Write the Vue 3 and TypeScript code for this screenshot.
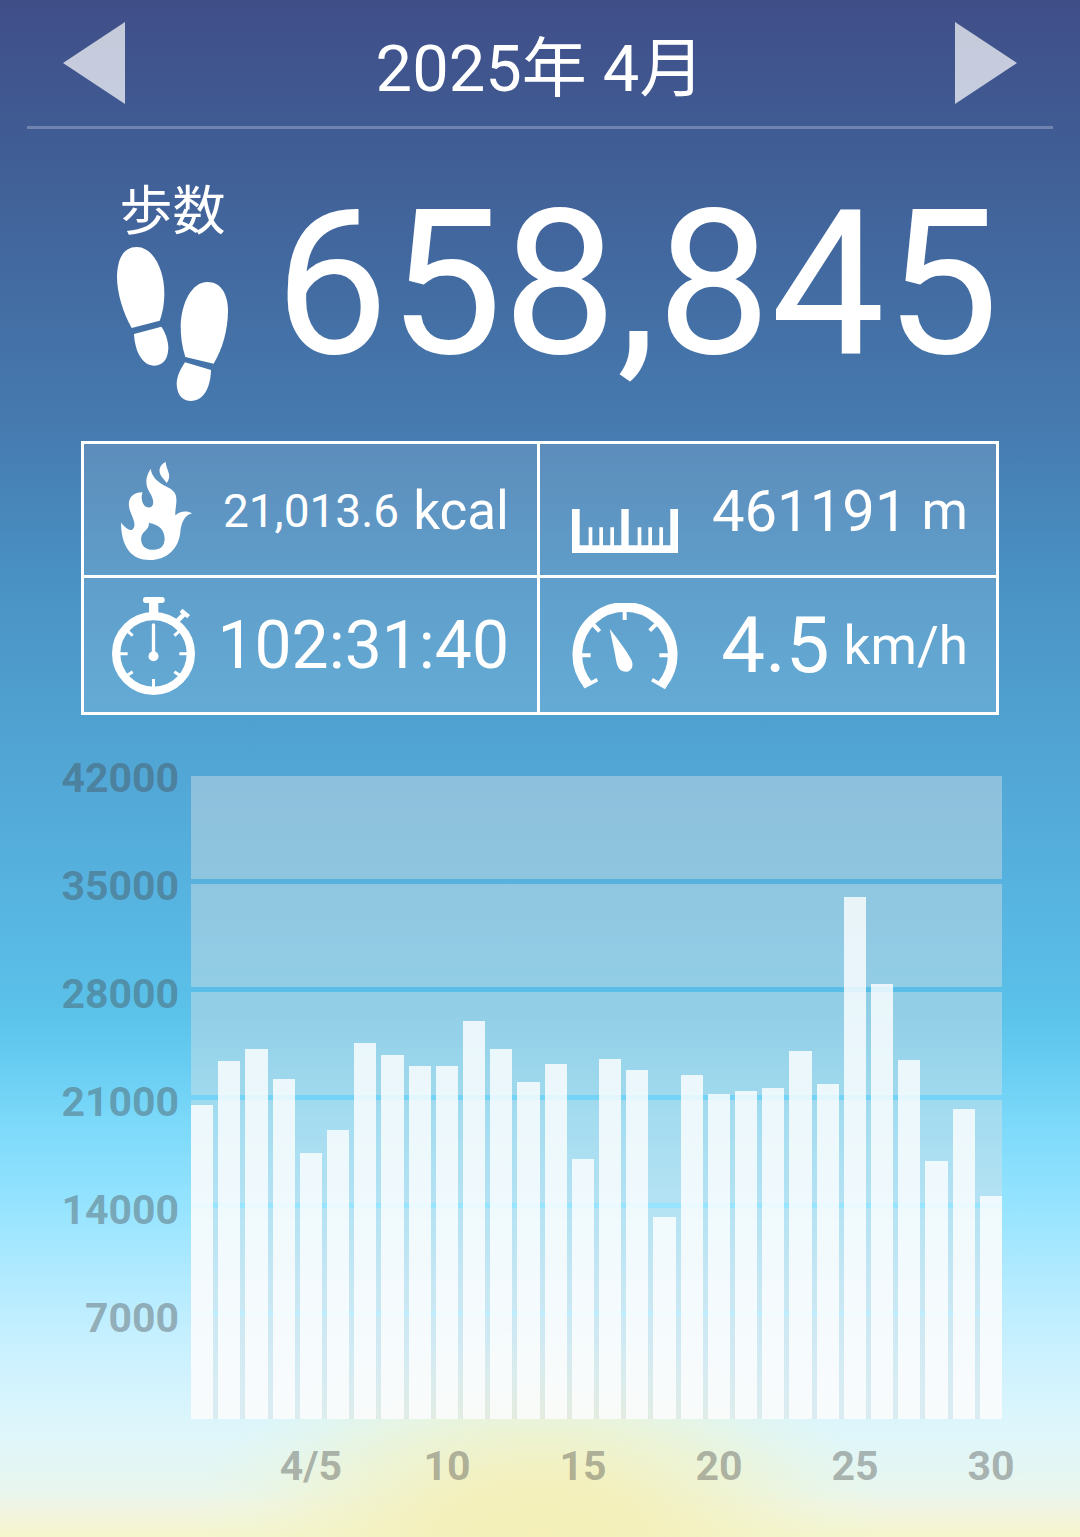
<script setup lang="ts">
interface Tick {
  day: number
  label: string
}

const year = 2025
const month = 4
const totalSteps = 658845

const dailySteps: number[] = [
  20352, 23204, 23982, 22037, 17241, 18732, 24403, 23593, 22880, 22880,
  25796, 23982, 21875, 23009, 16852, 23366, 22620, 13093, 22329, 21065,
  21259, 21486, 23884, 21713, 33833, 28195, 23269, 16722, 20093, 14454,
]

const levels: number[] = [42000, 35000, 28000, 21000, 14000, 7000]

// Steps that fill the plot from its bottom edge to its top edge
const plotRange = 41676

const ticks: Tick[] = [5, 10, 15, 20, 25, 30].map((day) => ({
  day,
  label: day === 5 ? `${month}/${day}` : String(day),
}))

const barHeight = (steps: number): string => `${(steps / plotRange) * 100}%`
</script>

<template>
  <main class="page">
    <header class="header">
      <button class="arrow" type="button" aria-label="前の月">
        <svg viewBox="0 0 62 82"><path d="M62 0V82L0 41Z" /></svg>
      </button>
      <h1 class="title">{{ year }}年 {{ month }}月</h1>
      <button class="arrow" type="button" aria-label="次の月">
        <svg viewBox="0 0 62 82"><path d="M0 0V82L62 41Z" /></svg>
      </button>
    </header>

    <section class="hero">
      <div class="hero-label">
        <h2 class="hero-name">歩数</h2>
        <svg class="feet" viewBox="51 231 333 462" aria-hidden="true">
          <path d="M95 474C70 430 51 370 51 320C52 270 68 231 110 231C160 231 193 300 193 370C193 400 188 430 179 452Z" />
          <path d="M102 492L184 470C198 490 205 515 205 535C204 565 190 587 163 587C130 587 105 550 102 492Z" />
          <path d="M256 561C246 530 242 500 242 465C244 400 275 336 322 336C365 336 384 375 384 425C383 480 368 535 341 581Z" />
          <path d="M255 577L333 600C332 650 312 693 272 693C240 692 230 665 230 638C232 615 243 595 255 577Z" />
        </svg>
      </div>
      <p class="hero-value">{{ totalSteps.toLocaleString('en-US') }}</p>
    </section>

    <section class="stats">
      <div class="stat">
        <svg class="icon flame" viewBox="122 81 214 295" aria-hidden="true">
          <path d="M257 81C256 95 270 115 267 127C266 135 263 141 259 144C255 134 239 125 238 108C238 95 247 85 257 81Z" />
          <path
            fill-rule="evenodd"
            d="M212 101C213 125 235 143 258 155C280 165 289 175 289 195C289 215 284 230 286 241C297 232 318 224 336 236C315 240 304 262 301 290C297 340 262 376 208 376C155 376 123 340 122 263C130 275 145 287 155 286C170 272 160 255 150 230C140 205 145 172 187 172C180 190 187 218 207 218C226 216 220 190 208 172C194 148 195 125 212 101ZM206 263C213 267 232 268 244 283C256 300 258 327 242 339C226 349 202 347 191 336C180 324 180 304 190 293C199 284 208 276 206 263Z"
          />
        </svg>
        <p class="reading"><span class="num small">21,013.6</span><span class="unit">kcal</span></p>
      </div>
      <div class="stat">
        <svg class="icon ruler" viewBox="126 96 318 264" aria-hidden="true">
          <path d="M126 222H149V331H274V222H296V331H421V222H444V354H126Z" />
          <path d="M176 277h11v56h-11zM208 277h11v56h-11zM241 277h11v56h-11zM323 277h11v56h-11zM355 277h11v56h-11zM388 277h11v56h-11z" />
        </svg>
        <p class="reading"><span class="num medium">461191</span><span class="unit">m</span></p>
      </div>
      <div class="stat">
        <svg class="icon watch" viewBox="96 486 249 294" aria-hidden="true">
          <circle class="line" cx="220.500" cy="655.500" r="112" stroke-width="25" />
          <rect x="189" y="486" width="65" height="18" rx="8" />
          <path d="M207 500h28v40h-28z" />
          <path class="line" stroke-width="14" d="M290 560L314 536" />
          <path class="line" stroke-width="13" d="M303 526L326 545" />
          <path class="line" stroke-width="9" d="M118 656H143M298 656H322M220.500 732V756M138 584L158 602M303 584L283 602M138 724L158 710M303 724L283 710" />
          <path class="line" stroke-width="10" stroke-linecap="round" d="M220.500 570V660" />
          <circle cx="220.500" cy="664" r="15" />
        </svg>
        <p class="reading"><span class="num large">102:31:40</span></p>
      </div>
      <div class="stat">
        <svg class="icon gauge" viewBox="126 505 318 258" aria-hidden="true">
          <path class="line" stroke-width="29" d="M174 750A143 143 0 1 1 396 750" />
          <path class="line" stroke-width="11" d="M161 757L202 735M408 759L366 735" />
          <path class="line" stroke-width="12" d="M284 528V556M188 568L209 590M381 566L359 588M150 662H182M388 662H420" />
          <path d="M239 583C265 615 290 650 304 675C313 695 303 710 289 711C270 710 262 700 258 675C254 650 245 610 239 583Z" />
        </svg>
        <p class="reading"><span class="num xlarge">4.5</span><span class="unit">km/h</span></p>
      </div>
    </section>

    <section class="chart">
      <ul class="y-axis">
        <li v-for="level in levels" :key="level">{{ level }}</li>
      </ul>
      <div class="plot">
        <div class="bands">
          <div v-for="level in levels" :key="level" class="band"></div>
        </div>
        <div class="bars">
          <div
            v-for="(steps, i) in dailySteps"
            :key="i"
            class="bar"
            :style="{ height: barHeight(steps) }"
          ></div>
        </div>
      </div>
      <ul class="x-axis">
        <li v-for="tick in ticks" :key="tick.day" :style="{ gridColumn: tick.day }">
          {{ tick.label }}
        </li>
      </ul>
    </section>
  </main>
</template>

<style>
body {
  margin: 0;
}
</style>

<style scoped>
.page {
  box-sizing: border-box;
  min-height: 100vh;
  padding-bottom: 50px;
  overflow: hidden;
  color: #fff;
  font-family: Roboto, "Noto Sans CJK JP", sans-serif;
  background:
    radial-gradient(
      ellipse 350px 200px at 50% 100%,
      rgba(244, 240, 184, 1) 0%,
      rgba(244, 240, 186, 0.92) 30%,
      rgba(243, 242, 194, 0.6) 58%,
      rgba(238, 245, 206, 0.24) 82%,
      rgba(234, 246, 214, 0) 100%
    ),
    linear-gradient(
      #404e88 0%,
      #405c94 9%,
      #436ea4 20%,
      #467bb0 28%,
      #4a92c4 38%,
      #50a3d2 48%,
      #56b1de 57%,
      #5bc2ea 66%,
      #66ccf1 69%,
      #7cd9fa 73%,
      #93e3ff 78%,
      #b1eaff 83%,
      #cbf1ff 88%,
      #def6fb 93%,
      #e8f6ee 97%,
      #f0f5e4 98%,
      #f6f5cc 100%
    );
}

h1,
h2,
p,
ul {
  margin: 0;
  padding: 0;
  list-style: none;
}

h1,
h2 {
  font-weight: 400;
}

svg {
  display: block;
  fill: #fff;
}

.header {
  display: flex;
  align-items: center;
  justify-content: space-between;
  height: 126px;
  margin: 0 27px;
  padding: 0 36px;
  border-bottom: 3px solid rgba(255, 255, 255, 0.25);
}

.arrow {
  width: 62px;
  height: 82px;
  padding: 0;
  border: 0;
  background: none;
  opacity: 0.7;
  cursor: pointer;
}

.title {
  padding-top: 12px;
  font-size: 65px;
  line-height: 80px;
}

.hero {
  display: flex;
  justify-content: space-between;
  margin: 0 81px;
  padding: 51px 0 40px 36px;
}

.hero-label {
  display: flex;
  flex-direction: column;
  align-items: center;
}

.hero-name {
  font-size: 53px;
  line-height: 64px;
}

.feet {
  width: 111px;
  height: 154px;
  margin-top: 3px;
}

.hero-value {
  padding-top: 2px;
  font-size: 203px;
  line-height: 204px;
}

.stats {
  display: grid;
  grid-template-columns: 1fr 1fr;
  grid-auto-rows: 134px;
  margin: 0 81px;
  border: 3px solid #fff;
  background: rgba(255, 255, 255, 0.12);
  background-clip: padding-box;
}

.stat {
  display: flex;
  align-items: center;
  justify-content: space-between;
  padding: 2px 28px 0;
}

.stat:nth-child(odd) {
  border-right: 3px solid #fff;
}

.stat:nth-child(even) {
  padding-left: 32px;
}

.stat:nth-child(-n + 2) {
  border-bottom: 3px solid #fff;
}

.icon {
  flex: none;
}

.line {
  fill: none;
  stroke: #fff;
}

.flame {
  width: 71px;
  height: 98px;
  margin-left: 9px;
}

.ruler {
  width: 106px;
  height: 88px;
}

.watch {
  width: 83px;
  height: 98px;
}

.gauge {
  width: 106px;
  height: 86px;
}

.reading {
  display: flex;
  align-items: center;
  gap: 14px;
  line-height: 80px;
}

.unit {
  font-size: 53px;
}

.small {
  font-size: 46px;
}

.medium {
  font-size: 58px;
}

.large {
  font-size: 66px;
}

.xlarge {
  font-size: 78px;
}

.chart {
  display: grid;
  grid-template-columns: 179px minmax(0, 1fr);
  column-gap: 12px;
  margin: 42px 78px 0 0;
  color: rgba(68, 68, 68, 0.4);
  font-size: 41px;
  font-weight: 700;
  line-height: 42px;
}

.y-axis li {
  height: 108px;
  text-align: right;
}

.plot {
  display: grid;
  margin-top: 19px;
  align-self: start;
}

.bands,
.bars {
  display: flex;
  grid-area: 1 / 1;
  gap: 5px;
}

.bands {
  flex-direction: column;
}

.band {
  height: 103px;
  background: rgba(221, 224, 228, 0.43);
}

.bars {
  align-items: flex-end;
}

.bar {
  flex: 1;
  background: rgba(255, 255, 255, 0.8);
}

.x-axis {
  display: grid;
  grid-column: 2;
  grid-template-columns: repeat(30, minmax(0, 1fr));
  column-gap: 5px;
  margin-top: 26px;
}

.x-axis li {
  display: flex;
  justify-content: center;
  white-space: nowrap;
}
</style>
